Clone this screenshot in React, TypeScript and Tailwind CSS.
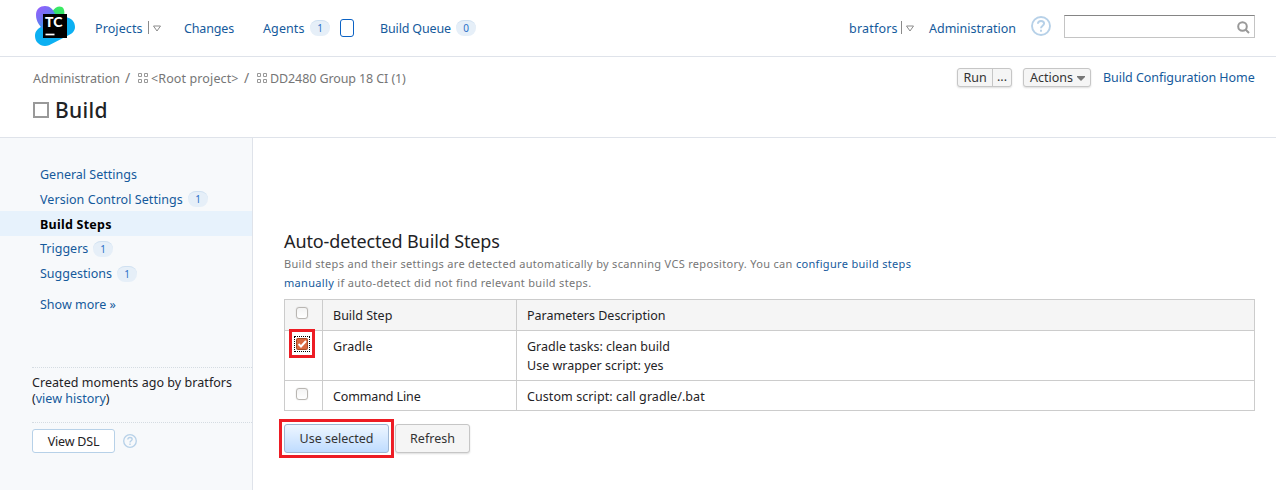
import React from "react";

const link = "text-[#155a9c]";

function Badge({ value, className = "" }: { value: number; className?: string }) {
  return (
    <span className={`flex h-4 w-5 shrink-0 items-center justify-center rounded-full border-t border-[#cfe0f1] bg-[#e6eff8] pb-px text-[10px] leading-none text-[#2a70c8] ${className}`}>
      {value}
    </span>
  );
}

function Logo() {
  return (
    <svg className="h-10 w-10 shrink-0" viewBox="0 0 40 40">
      <defs>
        <linearGradient id="violet" x1="0" y1="0" x2="0.7" y2="1">
          <stop offset="0" stopColor="#9b5cff" />
          <stop offset="0.5" stopColor="#6f73f2" />
          <stop offset="1" stopColor="#14aef0" />
        </linearGradient>
        <linearGradient id="green" x1="1" y1="0" x2="0" y2="1">
          <stop offset="0" stopColor="#3df05c" />
          <stop offset="1" stopColor="#2fd283" />
        </linearGradient>
      </defs>
      <path d="M30 11 C37 12 40 16 40 21 C40 25 37 28 33 29.500L14 39.200C7 42 0 37 0 30C0 25 3 22 8 20Z" fill="#0cb0f2" />
      <path d="M17 6 C20 1 24-.5 27 1 C30 3 29.500 7 29 12H14Z" fill="url(#green)" />
      <path d="M10 0C15 0 18 3 20 8V22L7 23C5 19 1 16 1 9C1 3 5 0 10 0Z" fill="url(#violet)" />
      <path d="M8 8h24v24H8z" fill="#000" />
      <path d="M10.500 28.500h9" stroke="#fff" strokeWidth="1.700" />
      <text x="10" y="21.200" fill="#fff" fontFamily="Lato, sans-serif" fontWeight="900" fontSize="14">TC</text>
    </svg>
  );
}

function MenuArrow({ className = "" }: { className?: string }) {
  return (
    <svg className={`h-4 w-[14px] shrink-0 ${className}`} viewBox="0 0 14 16" fill="none" stroke="#8b8b8b">
      <path d="M.5 1v13" />
      <path d="M5.500 6h7l-3.500 5z" />
    </svg>
  );
}

function ProjectIcon({ className = "" }: { className?: string }) {
  return (
    <svg className={`-mt-px h-[10px] w-[10px] shrink-0 ${className}`} viewBox="0 0 10 10" fill="none" stroke="#999">
      <path d="M.5.500h3v3h-3zM6.500.500h3v3h-3zM.5 6.500h3v3h-3zM6.500 6.500h3v3h-3z" />
    </svg>
  );
}

function Help({ className = "" }: { className?: string }) {
  return (
    <svg className={`shrink-0 ${className}`} viewBox="0 0 20 20" fill="none" stroke="#b7d1e8" strokeWidth="1.900">
      <circle cx="10" cy="10" r="9" />
      <path d="M6.900 7.800C7 5.900 8.300 5 10 5s3.100 1 3.100 2.600C13.100 9.700 10 9.800 10 12.200" />
      <path d="M10 13.700v2" />
    </svg>
  );
}

function Checkbox() {
  return <span className="block h-3 w-3 rounded-[3px] border border-[#b9b6b2] bg-gradient-to-b from-[#f3f3f3] to-white shadow-[0_0_1px_#bbb]" />;
}

export default function App() {
  return (
    <div className="h-[490px] w-[1276px] overflow-hidden whitespace-nowrap bg-white font-['Noto_Sans',sans-serif] text-[12.500px] leading-4 text-[#1f2326]">
      <header className="flex h-[57px] items-center border-b border-[#dfe3ea] pl-[35px]">
        <div className="-mt-1 w-[60px]"><Logo /></div>
        <a className={`w-[53px] pt-px tracking-[0.1px] ${link}`}>Projects</a>
        <MenuArrow className="mr-[22px]" />
        <a className={`w-[79px] pt-px tracking-[-0.15px] ${link}`}>Changes</a>
        <a className={`w-[47px] pt-px tracking-[0.1px] ${link}`}>Agents</a>
        <Badge value={1} />
        <span className="ml-[10px] mr-[26px] h-[18px] w-[14px] rounded-[3px] border border-[#0b62c4]" />
        <a className={`w-[76px] pt-px tracking-[-0.15px] ${link}`}>Build Queue</a>
        <Badge value={0} />
        <a className={`ml-[373px] w-[52px] pt-px tracking-[0.2px] ${link}`}>bratfors</a>
        <MenuArrow className="mr-[14px]" />
        <a className={`w-[102px] pt-px ${link}`}>Administration</a>
        <Help className="-mt-1 h-5 w-5" />
        <div className="-mt-1 ml-[13px] flex h-[23px] w-[191px] items-center justify-end border border-[#c4c4c4] border-t-[#858585] pr-1 pt-[3px]">
          <svg className="h-[13px] w-[13px]" viewBox="0 0 13 13" fill="none" stroke="#999" strokeWidth="2">
            <circle cx="5.500" cy="5.500" r="4.300" />
            <path d="M8.500 8.500l3.500 3.500" />
          </svg>
        </div>
      </header>

      <section className="h-[81px] border-b border-[#dfe3ea] pl-[33px] pt-3">
        <div className="flex h-[18px] items-center text-[#767676]">
          <span className="w-[92px] pt-px">Administration</span>
          <span className="w-[13px] text-[14px]">/</span>
          <ProjectIcon />
          <span className="ml-[3px] w-[93px] pt-px tracking-[0.12px]">&lt;Root project&gt;</span>
          <span className="w-[13px] text-[14px]">/</span>
          <ProjectIcon />
          <span className="ml-[3px] w-[687px] pt-px tracking-[-0.1px]">DD2480 Group 18 CI (1)</span>
          <div className="-mt-[2px] flex h-[19px] w-[55px] items-center rounded-[3px] border border-[#c6c6c6] bg-[#f5f5f5] text-[#333] shadow-[0_1px_2px_#ddd]">
            <span className="flex h-full w-[35px] items-center justify-center border-r border-[#c6c6c6] pt-px">Run</span>
            <span className="flex-1 text-center">...</span>
          </div>
          <div className="-mt-[2px] ml-[11px] flex h-[19px] w-[68px] items-center rounded-[3px] border border-[#c6c6c6] bg-[#f5f5f5] pl-[6px] text-[#333] shadow-[0_1px_2px_#ddd]">
            <span className="w-[47px] pt-px">Actions</span>
            <svg className="mt-[3px] h-[5px] w-[8px]" viewBox="0 0 8 5"><path d="M0 0h8v1L4 5 0 1z" fill="#777" /></svg>
          </div>
          <a className={`ml-3 tracking-[-0.06px] ${link}`}>Build Configuration Home</a>
        </div>
        <h1 className="mt-2 flex h-[30px] items-center text-[21px] font-medium leading-[30px] text-[#1f2326]">
          <span className="mr-[6px] h-4 w-4 border-2 border-[#999]" />
          <span className="tracking-[0.3px]">Build</span>
        </h1>
      </section>

      <div className="flex h-[352px]">
        <aside className="w-[253px] shrink-0 border-r border-[#dfe3ea] bg-[#f7f9fb] pt-6">
          <nav className={link}>
            <a className="flex h-[25px] items-center pl-10">General Settings</a>
            <a className="flex h-6 items-center pl-10"><span className="w-[148px] pt-[2px] tracking-[0.06px]">Version Control Settings</span><Badge value={1} /></a>
            <a className="flex h-[25px] items-center bg-[#e7f2fc] pl-10 pt-[2px] font-bold tracking-[0.25px] text-black">Build Steps</a>
            <a className="flex h-[25px] items-center pl-10"><span className="w-[53px]">Triggers</span><Badge value={1} /></a>
            <a className="flex h-[25px] items-center pl-10"><span className="w-[77px]">Suggestions</span><Badge value={1} /></a>
            <a className="mt-[6px] flex h-[25px] items-center pl-10">Show more »</a>
          </nav>
          <div className="ml-8 mt-[50px] h-[55px] border-t border-dotted border-[#d5dce2] pt-[7px]">
            <div className="tracking-[0.05px]">Created moments ago by bratfors</div>
            <div>(<a className={link}>view history</a>)</div>
          </div>
          <div className="ml-8 flex items-center border-t border-dotted border-[#d5dce2] pt-[6px]">
            <button className="h-6 w-[83px] rounded-[3px] border border-[#b7d1e8] bg-white pt-px tracking-[-0.2px]">View DSL</button>
            <Help className="ml-2 h-[14px] w-[14px]" />
          </div>
        </aside>

        <main className="w-[1002px] pl-[31px] pt-[91px]">
          <h2 className="h-[25px] text-[18px] leading-6 tracking-[-0.12px]">Auto-detected Build Steps</h2>
          <p className="h-[45px] text-[11px] leading-[19px] tracking-[0.32px] text-[#767676]">
            Build steps and their settings are detected automatically by scanning VCS repository. You can <a className={link}>configure build steps</a>
            <br />
            <a className={link}>manually</a> if auto-detect did not find relevant build steps.
          </p>
          <div className="grid grid-cols-[38px_194px_1fr] grid-rows-[31px_50px_30px] border-l border-t border-[#ccc] *:border-b *:border-r *:border-[#ccc]">
            <div className="bg-[#f5f5f5] pl-[11px] pt-[7px]"><Checkbox /></div>
            <div className="bg-[#f5f5f5] pl-[10px] pt-[8px]">Build Step</div>
            <div className="bg-[#f5f5f5] pl-[10px] pt-[8px]">Parameters Description</div>
            <div className="relative">
              <span className="absolute left-1 top-[-2px] flex h-[29px] w-[26px] items-center justify-center border-[3px] border-[#ed1c24]">
                <span className="flex h-4 w-4 items-center justify-center border border-dotted border-black">
                  <svg className="h-3 w-3 shrink-0" viewBox="0 0 12 12">
                    <rect width="12" height="12" rx="2" fill="#a84a24" />
                    <rect x="1" y="1" width="10" height="10" rx="1" fill="#d9693f" />
                    <path d="M2.500 6l2.500 2.500L10 3" fill="none" stroke="#fff" strokeWidth="2" />
                  </svg>
                </span>
              </span>
            </div>
            <div className="pl-[10px] pt-[8px] tracking-[0.1px]">Gradle</div>
            <div className="pl-[10px] pt-[6px] leading-[19px]">Gradle tasks: clean build<br />Use wrapper script: yes</div>
            <div className="pl-[11px] pt-[7px]"><Checkbox /></div>
            <div className="pl-[10px] pt-[8px] tracking-[-0.12px]">Command Line</div>
            <div className="pl-[10px] pt-[8px] tracking-[0.08px]">Custom script: call gradle/.bat</div>
          </div>
          <div className="-ml-[5px] mt-2 flex items-center">
            <div className="h-[39px] w-[115px] border-[3px] border-[#ed1c24] p-[2px]">
              <button className="h-[29px] w-[105px] rounded-[3px] border border-[#9fb7d3] bg-gradient-to-b from-[#eef6ff] to-[#bfdcff] text-[#333]">Use selected</button>
            </div>
            <button className="ml-px h-[29px] w-[75px] rounded-[3px] border border-[#c6c6c6] bg-[#f5f5f5] text-[#333] shadow-[0_1px_2px_#ddd]">Refresh</button>
          </div>
        </main>
      </div>
    </div>
  );
}
